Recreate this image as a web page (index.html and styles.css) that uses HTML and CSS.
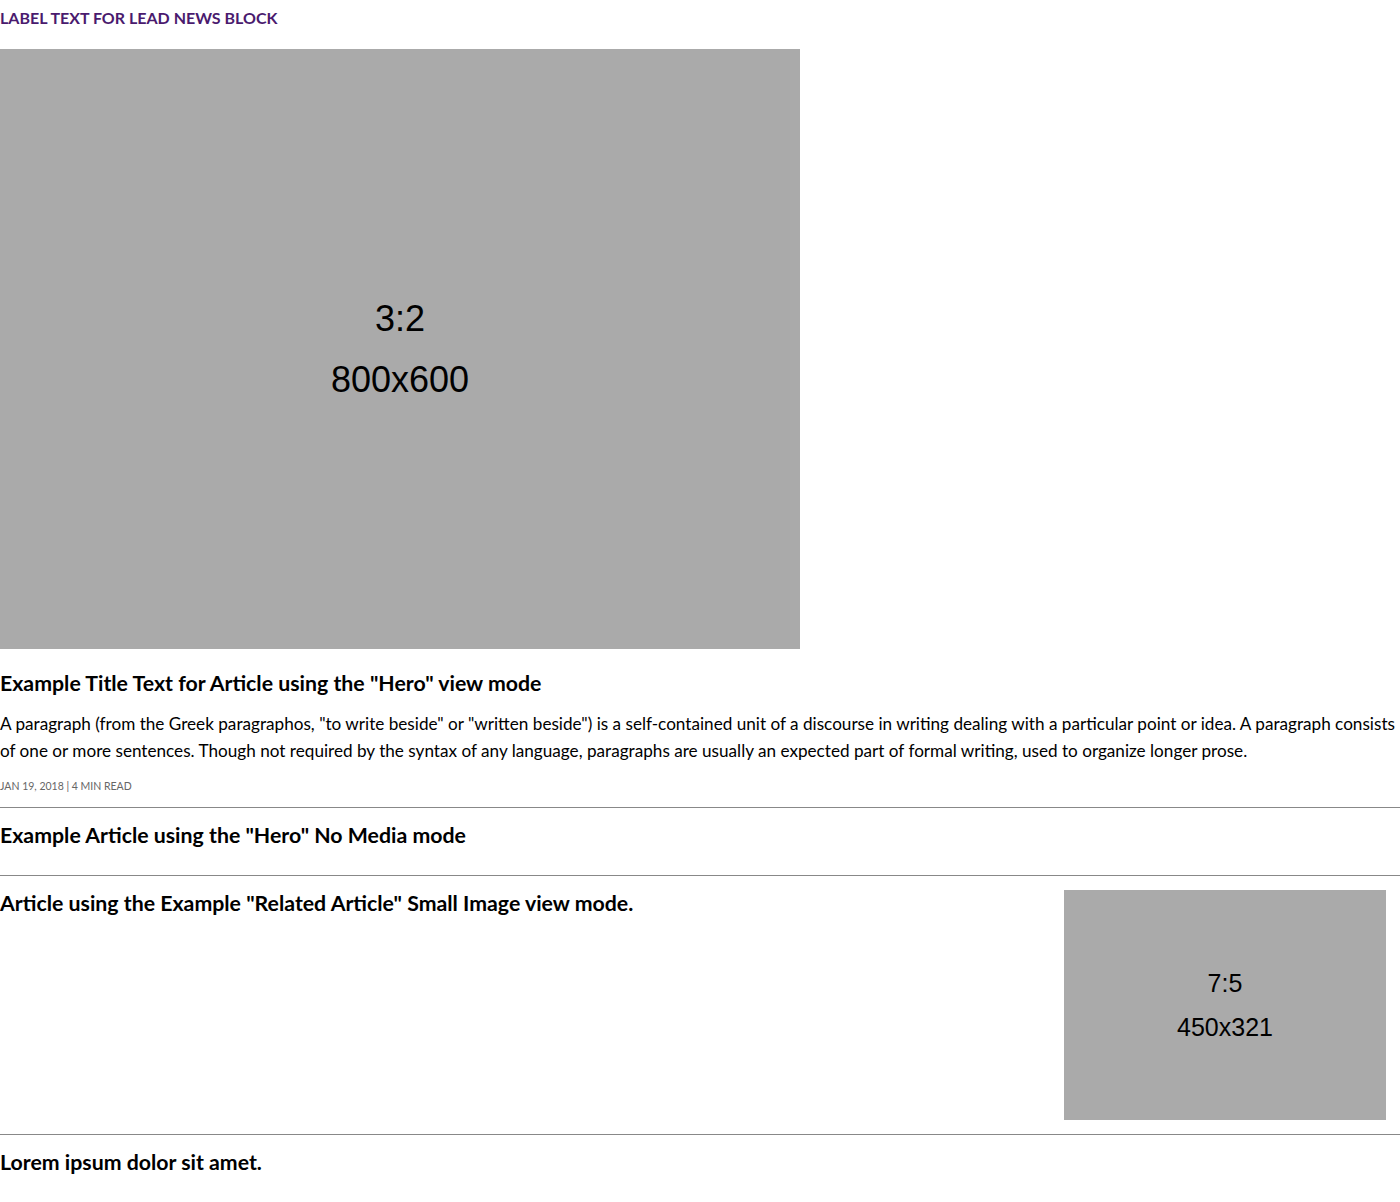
FILE: index.html
```html
<!DOCTYPE html>
<html>
<head>
<meta charset="utf-8">
<link rel="stylesheet" href="styles.css">
</head>
<body>
<section class="lead">
  <h2 class="label">Label text for lead news block</h2>
  <article class="hero">
    <div class="ph ph-hero"><span>3:2</span><span>800x600</span></div>
    <h3 class="title">Example Title Text for Article using the "Hero" view mode</h3>
    <p class="summary">A paragraph (from the Greek paragraphos, "to write beside" or "written beside") is a self-contained unit of a discourse in writing dealing with a particular point or idea. A paragraph consists of one or more sentences. Though not required by the syntax of any language, paragraphs are usually an expected part of formal writing, used to organize longer prose.</p>
    <div class="meta">Jan 19, 2018 | 4 min read</div>
  </article>
  <article class="item nomedia">
    <h3 class="title">Example Article using the "Hero" No Media mode</h3>
  </article>
  <article class="item related">
    <h3 class="title">Article using the Example "Related Article" Small Image view mode.</h3>
    <div class="ph ph-small"><span>7:5</span><span>450x321</span></div>
  </article>
  <article class="item last">
    <h3 class="title">Lorem ipsum dolor sit amet.</h3>
  </article>
</section>
</body>
</html>
```
FILE: styles.css
```css
* { box-sizing: border-box; }
body {
  margin: 0;
  font-family: Lato, "Open Sans", sans-serif;
  color: #000;
  background: #fff;
}
.label {
  margin: 0;
  padding-top: 8px;
  height: 49px;
  font-size: 16px;
  line-height: 20px;
  font-weight: 700;
  text-transform: uppercase;
  color: #4a1a6e;
}
.ph {
  background: #aaaaaa;
  display: flex;
  flex-direction: column;
  align-items: center;
  justify-content: center;
  font-family: "Liberation Sans", Arial, sans-serif;
  color: #000;
}
.ph-hero {
  width: 800px;
  height: 600px;
  font-size: 36px;
  line-height: 61px;
}
.ph-small {
  width: 322px;
  height: 230px;
  font-size: 25px;
  line-height: 44px;
  flex-shrink: 0;
}
.title {
  margin: 0;
  font-size: 21.3px;
  line-height: 26px;
  font-weight: 700;
}
.hero .title { margin-top: 21px; }
.summary {
  margin: 14px 0 0;
  font-size: 17.15px;
  line-height: 27px;
}
.meta {
  margin-top: 15px;
  font-size: 10.5px;
  line-height: 14px;
  text-transform: uppercase;
  color: #666;
  padding-bottom: 14px;
  border-bottom: 1px solid #888;
}
.item { border-bottom: 1px solid #888; }
.nomedia { padding: 14px 0 27px; }
.related {
  display: flex;
  justify-content: space-between;
  padding: 14px 14px 14px 0;
}
.last { border-bottom: 0; padding-top: 14px; }
```
